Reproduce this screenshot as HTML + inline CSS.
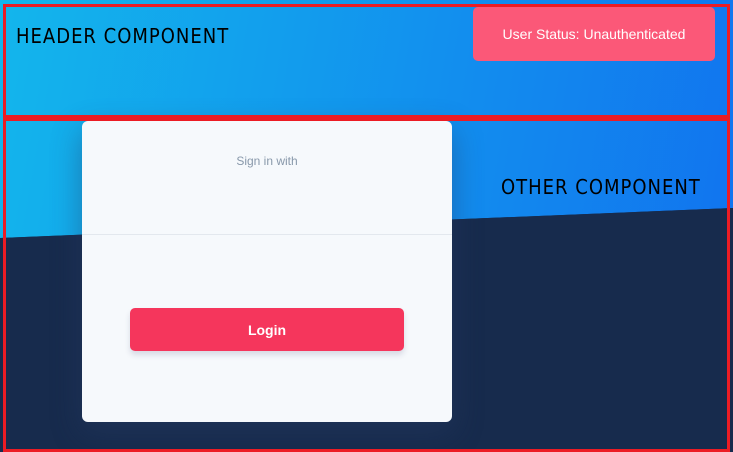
<!DOCTYPE html>
<html><head><style>
*{margin:0;padding:0;box-sizing:border-box}
body{width:733px;height:452px;overflow:hidden;position:relative;font-family:"Liberation Sans",sans-serif;background:#1a2c4c}
.bg{position:absolute;left:0;top:0;width:733px;height:452px;background:linear-gradient(100deg,#13b6ec,#1171ef);clip-path:polygon(0 0,733px 0,733px 208px,0 238px)}
.dark{position:absolute;left:0;top:0;width:733px;height:452px;background:#172b4d;clip-path:polygon(0 238px,733px 208px,733px 452px,0 452px)}
.box1{position:absolute;left:3px;top:4px;width:727px;height:114px;border:3px solid #ec1c24}
.box2{position:absolute;left:3px;top:118px;width:727px;height:334px;border:3px solid #ec1c24}
.h{position:absolute;font-size:20px;color:#000;letter-spacing:1px;font-family:"DejaVu Sans Condensed","Liberation Sans Narrow","Liberation Sans",sans-serif}
.status{position:absolute;left:473px;top:7px;width:242px;height:54px;background:#fb5878;border-radius:5px;color:#fff;font-size:14px;display:flex;align-items:center;justify-content:center}
.card{position:absolute;left:82px;top:121px;width:370px;height:301px;background:#f6f9fc;border-radius:6px;box-shadow:0 10px 30px rgba(40,60,100,.45)}
.sign{position:absolute;top:33px;width:100%;text-align:center;font-size:12px;color:#8898aa}
.div{position:absolute;top:113px;left:0;width:100%;height:1px;background:#e3e8ee}
.login{position:absolute;left:48px;top:187px;width:274px;height:43px;background:#f5365c;border-radius:5px;color:#fff;font-weight:bold;font-size:14px;display:flex;align-items:center;justify-content:center;box-shadow:0 4px 6px rgba(50,50,93,.15)}
</style></head><body>
<div class="bg"></div><div class="dark"></div>
<div class="card"><div class="sign">Sign in with</div><div class="div"></div><div class="login">Login</div></div>
<div class="box1"></div><div class="box2"></div>
<div class="h" style="left:16px;top:24px">HEADER COMPONENT</div>
<div class="h" style="left:501px;top:175px">OTHER COMPONENT</div>
<div class="status">User Status: Unauthenticated</div>
</body></html>
